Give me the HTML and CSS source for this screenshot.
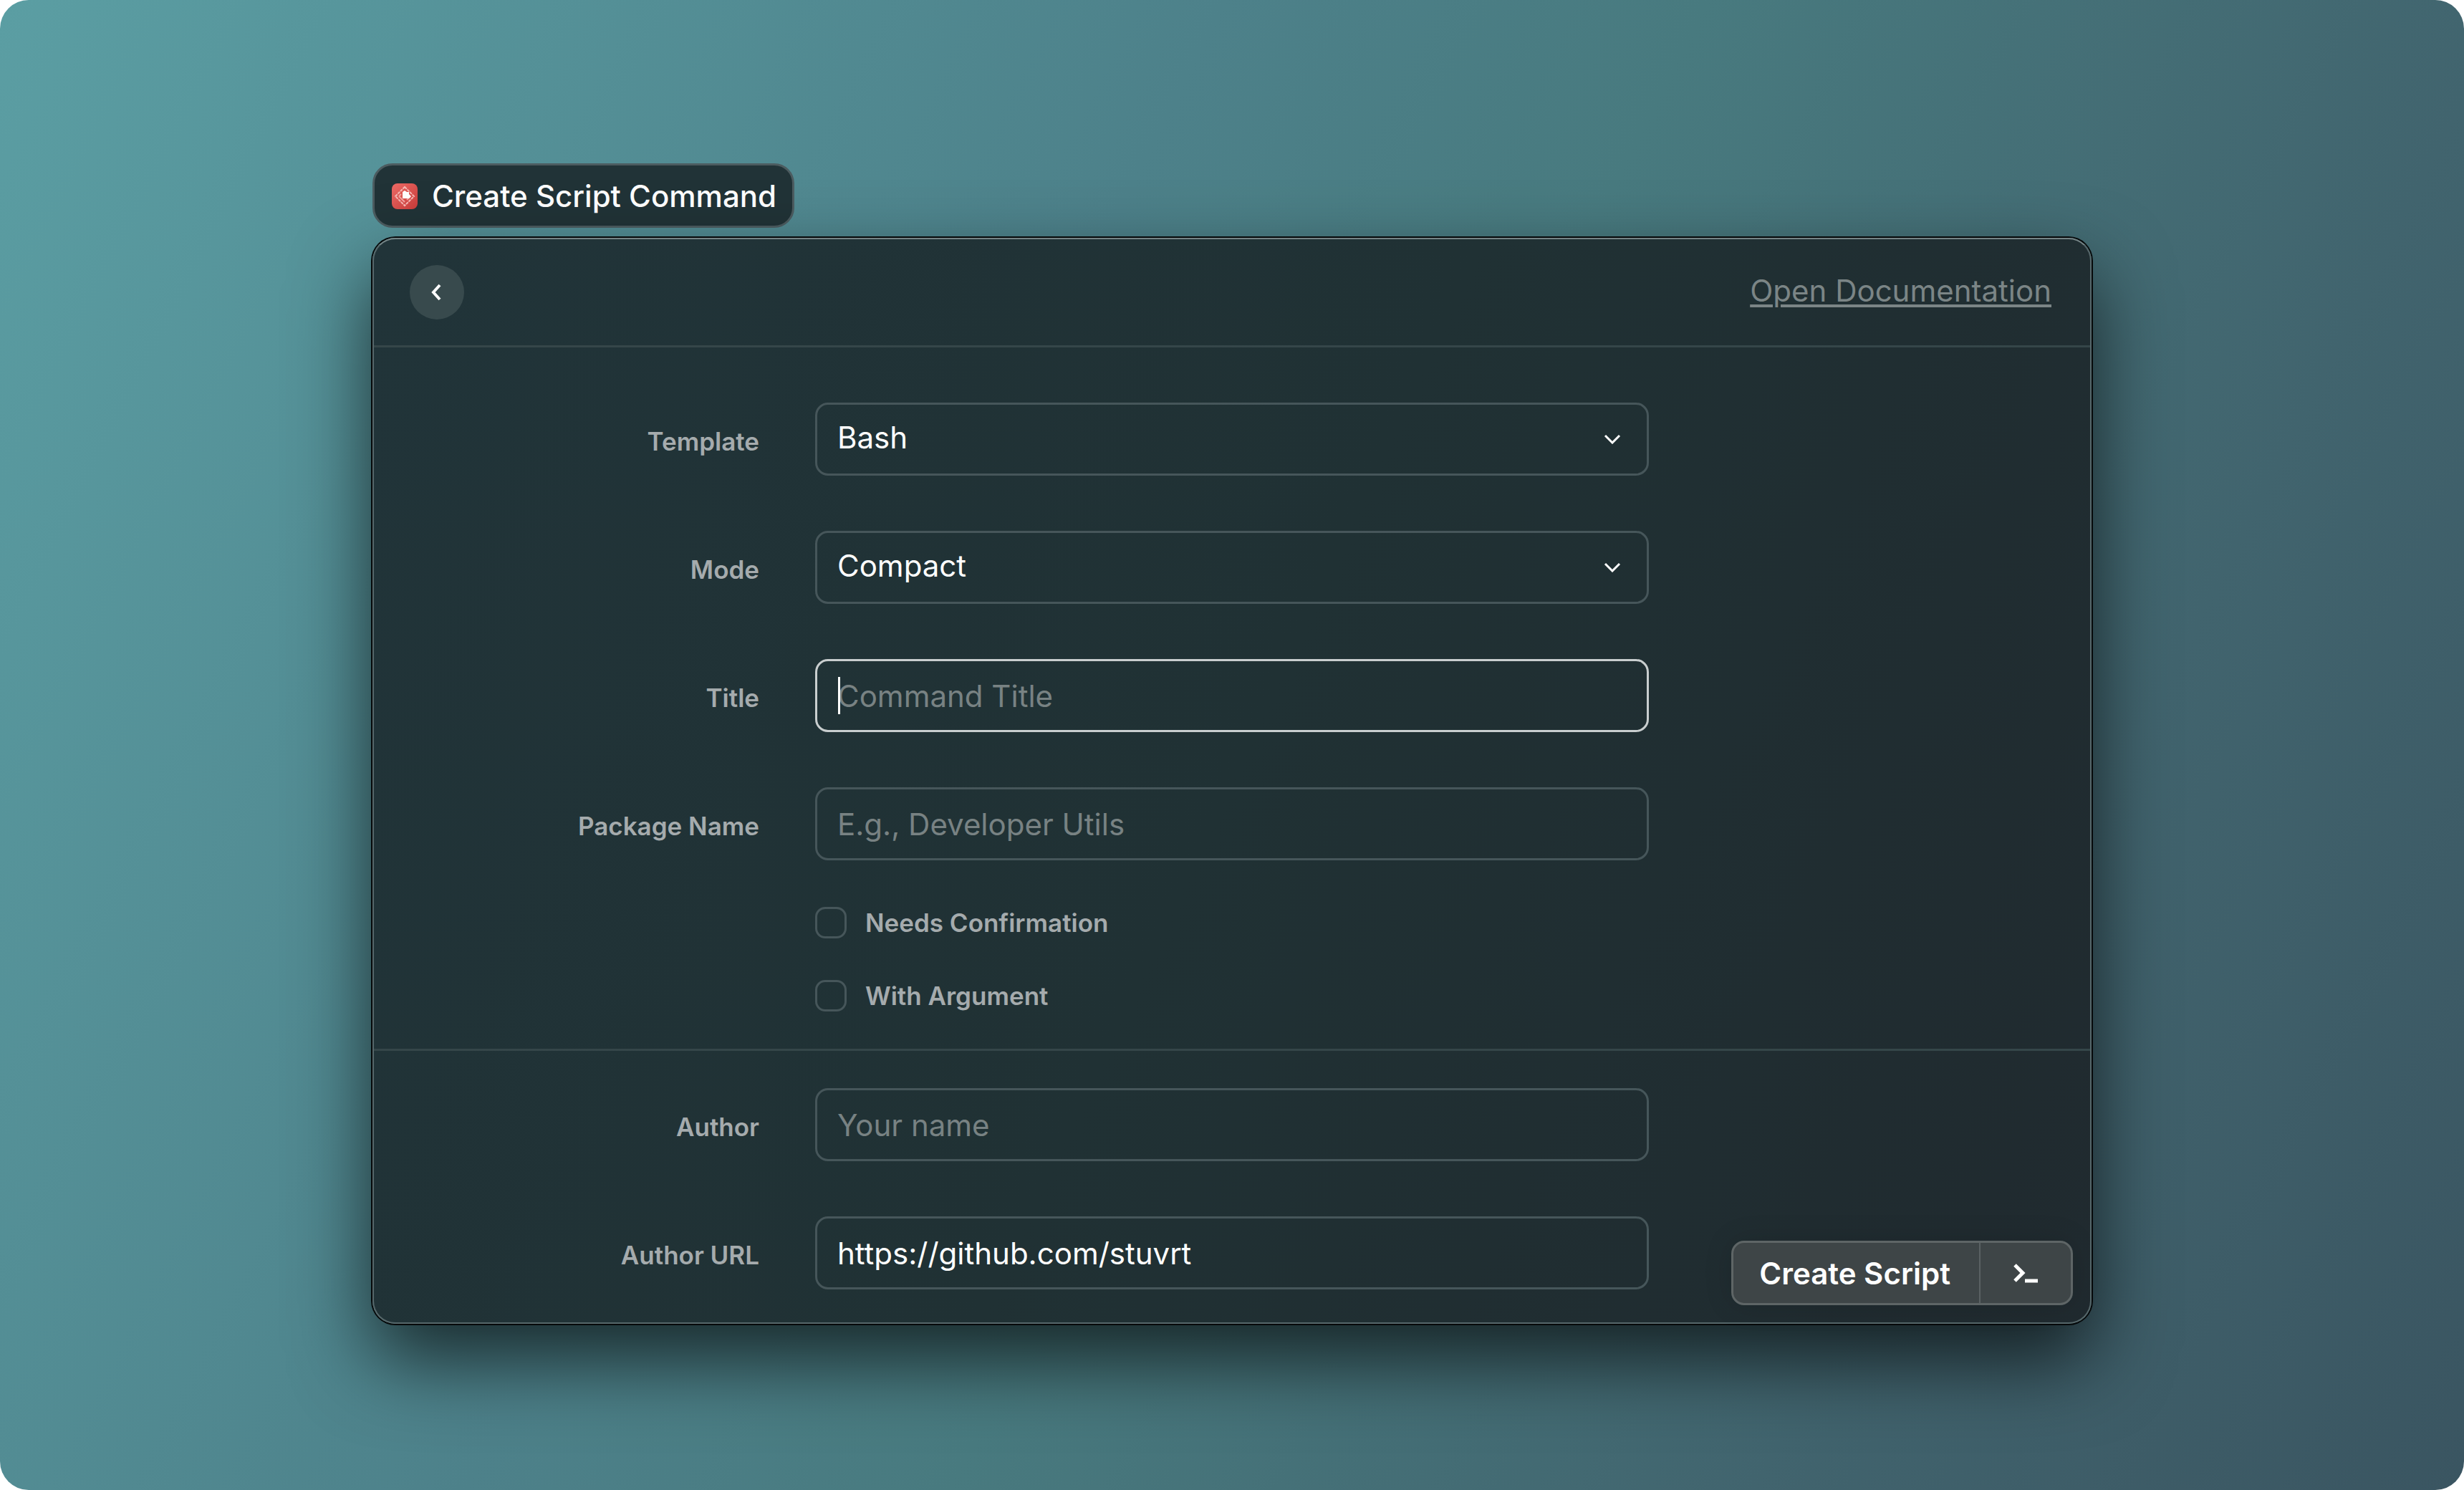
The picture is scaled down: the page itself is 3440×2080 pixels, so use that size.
FILE: index.html
```html
<!DOCTYPE html>
<html lang="en">
<head>
<meta charset="utf-8">
<title>Create Script Command</title>
<link rel="stylesheet" href="styles.css">
</head>
<body>
<main class="stage">
  <div class="layout">
    <h1 class="tag">
      <svg class="tag-icon" viewBox="0 0 36 36" aria-hidden="true">
        <defs>
          <linearGradient id="red" x1="0" y1="0" x2="1" y2="1">
            <stop offset="0" stop-color="#ee6b66"/>
            <stop offset="1" stop-color="#c93c3a"/>
          </linearGradient>
        </defs>
        <rect width="36" height="36" rx="8" fill="url(#red)"/>
        <path d="M18 5 31 18 18 31 5 18Z" fill="none" stroke="#f6b9b5" stroke-width="2" stroke-dasharray="4 1"/>
        <path d="M10 18 18 26M13 15 10 18M26 18 21 23" fill="none" stroke="#f3a5a1" stroke-width="2"/>
        <path d="M15 12 18 10 21 12H24V15L27 18 24 21H15Z" fill="#fff"/>
      </svg>
      <span>Create Script Command</span>
    </h1>

    <section class="window">
      <header class="header">
        <button class="back" type="button" aria-label="Back">
          <svg viewBox="0 0 24 24" aria-hidden="true"><path d="M16 2 7 12 16 22"/></svg>
        </button>
        <a class="docs" href="#docs">Open Documentation</a>
      </header>

      <form class="form">
        <div class="group">
          <div class="row">
            <label class="label" for="template">Template</label>
            <div class="control">
              <select class="field" id="template"><option>Bash</option></select>
              <svg class="chevron" viewBox="0 0 24 14" aria-hidden="true"><path d="M2 2 12 12 22 2"/></svg>
            </div>
          </div>
          <div class="row">
            <label class="label" for="mode">Mode</label>
            <div class="control">
              <select class="field" id="mode"><option>Compact</option></select>
              <svg class="chevron" viewBox="0 0 24 14" aria-hidden="true"><path d="M2 2 12 12 22 2"/></svg>
            </div>
          </div>
          <div class="row">
            <label class="label" for="title">Title</label>
            <div class="control">
              <input class="field field-active" id="title" type="text" placeholder="Command Title">
              <span class="caret"></span>
            </div>
          </div>
          <div class="row">
            <label class="label" for="package">Package Name</label>
            <div class="control">
              <input class="field" id="package" type="text" placeholder="E.g., Developer Utils">
            </div>
          </div>
          <div class="row row-checks">
            <div class="checks">
              <label class="check"><input type="checkbox"><span>Needs Confirmation</span></label>
              <label class="check"><input type="checkbox"><span>With Argument</span></label>
            </div>
          </div>
        </div>
        <div class="group group-author">
          <div class="row">
            <label class="label" for="author">Author</label>
            <div class="control">
              <input class="field" id="author" type="text" placeholder="Your name">
            </div>
          </div>
          <div class="row">
            <label class="label" for="url">Author URL</label>
            <div class="control">
              <input class="field" id="url" type="text" value="https://github.com/stuvrt">
            </div>
          </div>
        </div>
        <div class="actions">
          <button class="action action-main" type="submit">Create Script</button>
          <button class="action action-icon" type="button" aria-label="Open in terminal">
            <svg viewBox="0 0 36 28" aria-hidden="true"><path d="M3 3 14 14 3 25M17 25H35"/></svg>
          </button>
        </div>
      </form>
    </section>
  </div>
</main>
</body>
</html>
```
FILE: styles.css
```css
* {
  box-sizing: border-box;
}

body {
  margin: 0;
  background: #fff;
  color: #fff;
  font-family: Inter, "Liberation Sans", sans-serif;
  font-size: 42px;
}

.stage {
  min-height: 100vh;
  padding: 228px 40px;
  border-radius: 40px;
  background: linear-gradient(117deg, #5b9ea3 0%, #4d818a 38%, #487a7f 53%, #41646e 78%, #3a5561 100%);
}

.layout {
  width: 100%;
  max-width: 2400px;
  margin: 0 auto;
  display: flex;
  flex-direction: column;
  align-items: flex-start;
  gap: 14px;
}

.tag {
  display: flex;
  align-items: center;
  gap: 20px;
  height: 90px;
  margin: 0;
  padding: 2px 22px 0 24px;
  border: 3px solid #4c5c60;
  border-radius: 28px;
  background: #213337;
  font-size: 42px;
  font-weight: 500;
  line-height: 52px;
}

.tag-icon {
  width: 36px;
  height: 36px;
}

.window {
  position: relative;
  width: 100%;
  border: 2px solid #56676a;
  border-top-color: #758385;
  border-radius: 32px;
  background: linear-gradient(115deg, #213439 0%, #203134 50%, #202a2f 100%);
  box-shadow: 0 0 0 2px #06090a, 0 50px 110px rgba(0, 0, 0, 0.68);
}

.header {
  display: flex;
  align-items: center;
  justify-content: space-between;
  height: 151px;
  padding: 0 54px 0 50px;
  border-bottom: 3px solid #354649;
}

.back {
  display: grid;
  place-items: center;
  width: 76px;
  height: 76px;
  padding: 0;
  border: 0;
  border-radius: 50%;
  background: #384a4d;
}

.back svg {
  width: 24px;
  height: 24px;
}

.back path,
.chevron path,
.action path {
  fill: none;
  stroke: #fff;
  stroke-width: 3;
}

.back path {
  stroke-width: 4;
}

.docs {
  padding-bottom: 4px;
  color: #7b8586;
  line-height: 52px;
  text-decoration-thickness: 4px;
  text-underline-offset: 4px;
}

.group {
  display: flex;
  flex-direction: column;
  gap: 77px;
  padding: 77px 0 52px;
}

.group-author {
  padding: 52px 0 46px;
  border-top: 3px solid #354649;
}

.row {
  display: grid;
  grid-template-columns: 538fr 1164fr 538fr;
  column-gap: 78px;
  align-items: center;
}

.label,
.check {
  color: #a5abad;
  font-size: 35px;
  font-weight: 600;
  line-height: 44px;
}

.label {
  padding-top: 6px;
  text-align: right;
}

.control {
  position: relative;
}

.field {
  display: block;
  width: 100%;
  height: 102px;
  margin: 0;
  padding: 0 28px;
  border: 3px solid #46565a;
  border-radius: 18px;
  outline: 0;
  background: transparent;
  color: #fff;
  font: inherit;
  appearance: none;
}

select.field {
  padding-bottom: 6px;
}

.field::placeholder {
  color: #788283;
  opacity: 1;
}

.field-active {
  border-color: #c9cecf;
}

.caret {
  position: absolute;
  top: 25px;
  left: 32px;
  width: 3px;
  height: 52px;
  background: #fff;
}

.chevron {
  position: absolute;
  top: 44px;
  right: 39px;
  width: 24px;
  height: 14px;
}

.row-checks {
  margin-top: -12px;
}

.checks {
  grid-column: 2;
  display: flex;
  flex-direction: column;
  gap: 58px;
}

.check {
  display: flex;
  align-items: center;
  gap: 26px;
}

.check input {
  width: 44px;
  height: 44px;
  margin: 0;
  border: 3px solid #46565a;
  border-radius: 14px;
  appearance: none;
}

.actions {
  position: absolute;
  right: 24px;
  bottom: 24px;
  display: flex;
  height: 90px;
  border: 3px solid #5e6566;
  border-radius: 18px;
  background: #3e4547;
  box-shadow: 0 0 40px rgba(0, 0, 0, 0.12);
}

.action {
  display: grid;
  place-items: center;
  padding: 0;
  border: 0;
  background: transparent;
  color: #fff;
  font: inherit;
  font-weight: 600;
}

.action-main {
  padding: 0 40px 0 36px;
}

.action-icon {
  width: 128px;
  border-left: 2px solid #5a6163;
}

.action svg {
  width: 36px;
  height: 28px;
}

.action path {
  stroke-width: 5;
}
```
